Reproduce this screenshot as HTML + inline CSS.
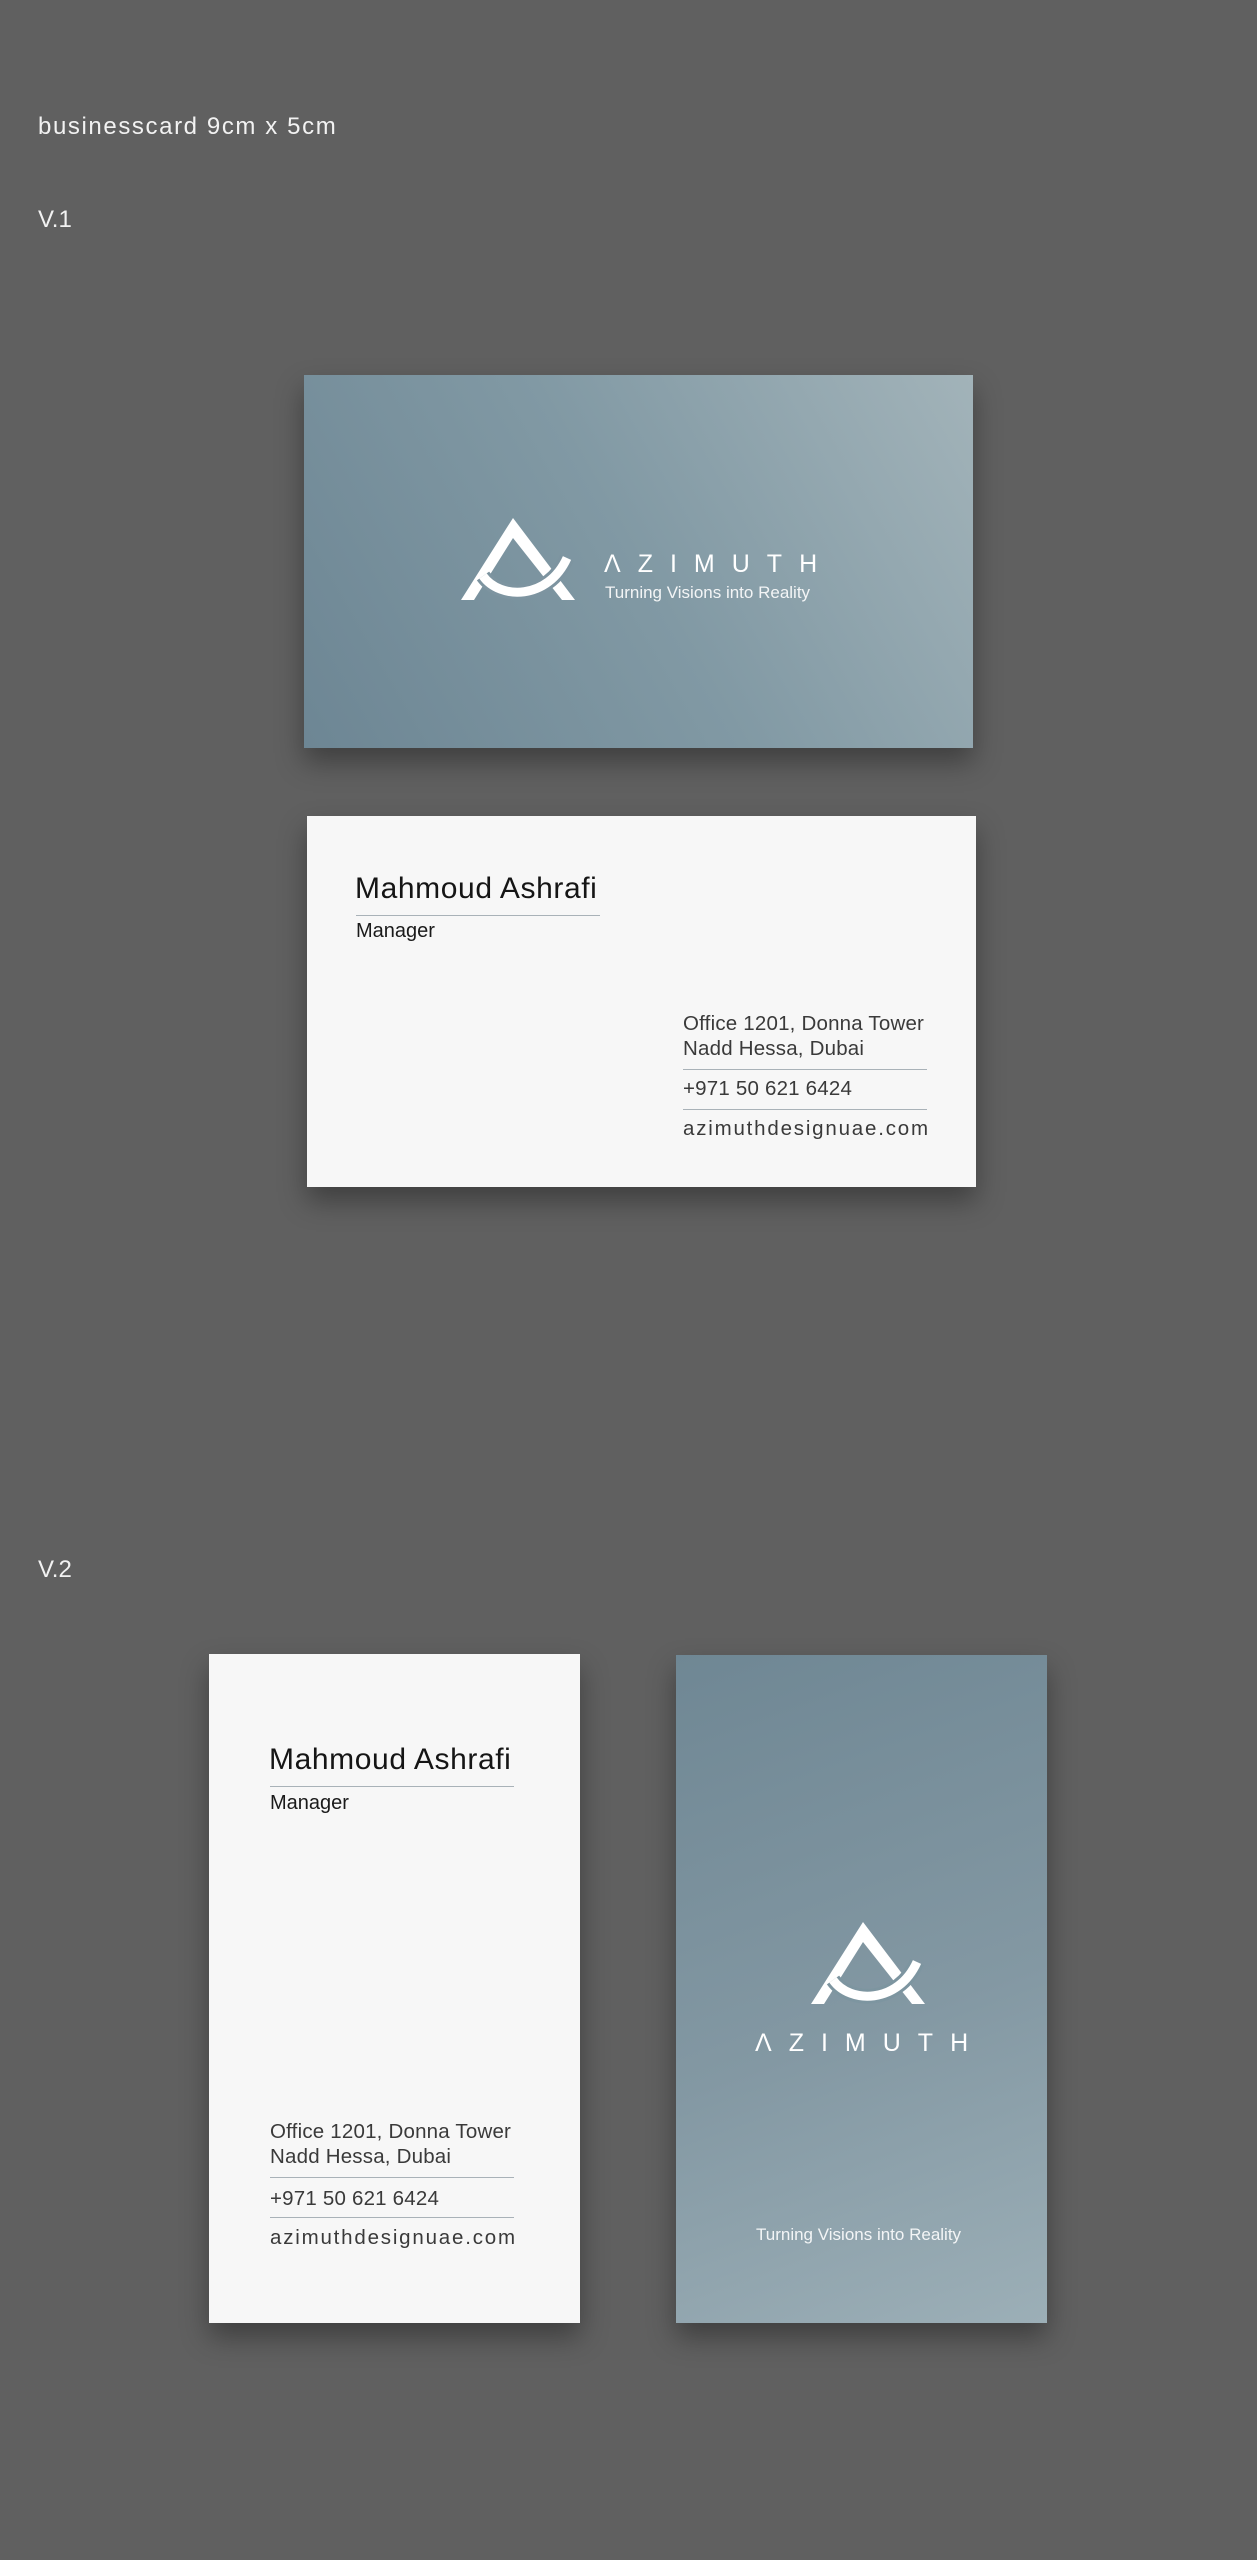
<!DOCTYPE html>
<html><head><meta charset="utf-8"><style>
*{margin:0;padding:0;box-sizing:border-box}
body{width:1257px;height:2560px;background:#606060;position:relative;overflow:hidden;font-family:"Liberation Sans",sans-serif}
.abs{position:absolute;white-space:nowrap}
.lbl{color:#f2f2f2;font-size:24px}
.card{position:absolute;box-shadow:0 14px 26px rgba(0,0,0,.35)}
.blue1{left:304px;top:375px;width:669px;height:373px;background:linear-gradient(60deg,#6d8694 0%,#8199a4 50%,#a2b3b9 100%)}
.blue2{left:676px;top:1655px;width:371px;height:668px;background:linear-gradient(160deg,#6f8794 0%,#8398a3 55%,#9cafb7 100%)}
.white{background:#f7f7f7}
.name{color:#151515;font-size:30px;letter-spacing:.6px}
.mgr{color:#1a1a1a;font-size:20px}
.info{color:#3a3a3a;font-size:20.5px;letter-spacing:.2px}
.web{color:#3a3a3a;font-size:20.5px;letter-spacing:1.8px}
.ln{position:absolute;height:1px;background:#a9b2b8}
.az{color:#fff;font-size:25px;letter-spacing:17px}
.tag{color:#f3f5f6;font-size:17px}
</style></head><body>
<div class="abs lbl" style="left:38px;top:113px;letter-spacing:1.6px">businesscard 9cm x 5cm</div>
<div class="abs lbl" style="left:38px;top:206px">V.1</div>
<div class="abs lbl" style="left:38px;top:1556px">V.2</div>

<div class="card blue1"></div>
<svg class="abs" style="left:440px;top:510px" width="150" height="100" viewBox="0 0 150 100">
<path d="M73,8 L135,90 L122,90 L73,28 L34,90 L21,90 Z" fill="#fff"/>
<path d="M43,66 C60,90 108,90 127,48" fill="none" stroke="#7d94a0" stroke-width="15"/>
<path d="M43,66 C60,90 108,90 127,48" fill="none" stroke="#fff" stroke-width="9"/>
</svg>
<div class="abs az" style="left:604px;top:550px">ΛZIMUTH</div>
<div class="abs tag" style="left:605px;top:583px">Turning Visions into Reality</div>

<div class="card white" style="left:307px;top:816px;width:669px;height:371px"></div>
<div class="abs name" style="left:355px;top:872px">Mahmoud Ashrafi</div>
<div class="ln" style="left:356px;top:915px;width:244px"></div>
<div class="abs mgr" style="left:356px;top:920px">Manager</div>
<div class="abs info" style="left:683px;top:1012px">Office 1201, Donna Tower</div>
<div class="abs info" style="left:683px;top:1037px">Nadd Hessa, Dubai</div>
<div class="ln" style="left:683px;top:1069px;width:244px"></div>
<div class="abs info" style="left:683px;top:1077px">+971 50 621 6424</div>
<div class="ln" style="left:683px;top:1109px;width:244px"></div>
<div class="abs web" style="left:683px;top:1117px">azimuthdesignuae.com</div>

<div class="card white" style="left:209px;top:1654px;width:371px;height:669px"></div>
<div class="abs name" style="left:269px;top:1743px">Mahmoud Ashrafi</div>
<div class="ln" style="left:270px;top:1786px;width:244px"></div>
<div class="abs mgr" style="left:270px;top:1792px">Manager</div>
<div class="abs info" style="left:270px;top:2120px">Office 1201, Donna Tower</div>
<div class="abs info" style="left:270px;top:2145px">Nadd Hessa, Dubai</div>
<div class="ln" style="left:270px;top:2177px;width:244px"></div>
<div class="abs info" style="left:270px;top:2187px">+971 50 621 6424</div>
<div class="ln" style="left:270px;top:2217px;width:244px"></div>
<div class="abs web" style="left:270px;top:2226px">azimuthdesignuae.com</div>

<div class="card blue2"></div>
<svg class="abs" style="left:790px;top:1914px" width="150" height="100" viewBox="0 0 150 100">
<path d="M73,8 L135,90 L122,90 L73,28 L34,90 L21,90 Z" fill="#fff"/>
<path d="M43,66 C60,90 108,90 127,48" fill="none" stroke="#7d95a0" stroke-width="15"/>
<path d="M43,66 C60,90 108,90 127,48" fill="none" stroke="#fff" stroke-width="9"/>
</svg>
<div class="abs az" style="left:755px;top:2029px">ΛZIMUTH</div>
<div class="abs tag" style="left:756px;top:2225px">Turning Visions into Reality</div>
</body></html>
